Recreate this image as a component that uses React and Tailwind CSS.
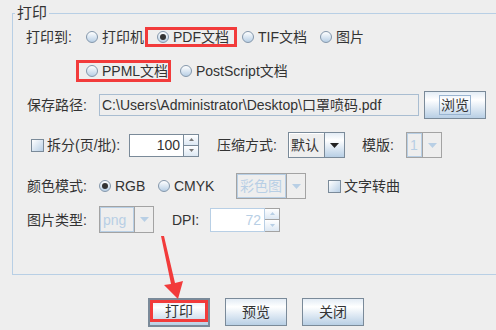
import React from 'react'

const RED = 'border-[#f23b3b]'

function Radio({ label, checked, className = '' }) {
  return (
    <span className={`flex items-center ${className}`}>
      <span className="flex items-center justify-center w-[12px] h-[12px] rounded-full border border-[#8497ab] bg-linear-to-b from-[#ffffff] to-[#b8cfe5]">
        {checked && <span className="w-[6px] h-[6px] rounded-full bg-[#333333]" />}
      </span>
      <span className="ml-[4px] whitespace-nowrap">{label}</span>
    </span>
  )
}

function Checkbox({ label, className = '' }) {
  return (
    <span className={`flex items-center ${className}`}>
      <span className="w-[13px] h-[13px] border border-[#7a8a99] bg-linear-to-br from-[#ffffff] to-[#b8cfe5]" />
      <span className="ml-[3px] whitespace-nowrap">{label}</span>
    </span>
  )
}

function Arrow({ up, color }) {
  return (
    <svg width="5" height="3" viewBox="0 0 5 3">
      <path d={up ? 'M2.5 0 L5 3 L0 3 Z' : 'M0 0 L5 0 L2.5 3 Z'} fill={color} />
    </svg>
  )
}

function Spinner({ value, disabled, className = '' }) {
  const c = disabled ? '#b8cfe5' : '#333333'
  return (
    <div className={`flex ${className}`}>
      <div
        className={`flex-1 flex items-center justify-end pr-[3px] bg-white border ${
          disabled ? 'border-[#b8cfe5] text-[#b8cfe5]' : 'border-[#7a8a99] text-[#333333]'
        }`}
      >
        {value}
      </div>
      <div className="w-[15px] flex flex-col">
        <div className={`flex-1 flex items-center justify-center border border-l-0 bg-linear-to-b from-[#ffffff] to-[#dde8f3] ${disabled ? 'border-[#a3a3a3]' : 'border-[#7a8a99]'}`}>
          <Arrow up color={disabled ? '#b8cfe5' : '#777777'} />
        </div>
        <div className={`flex-1 flex items-center justify-center border border-l-0 border-t-0 bg-linear-to-b from-[#ffffff] to-[#dde8f3] ${disabled ? 'border-[#a3a3a3]' : 'border-[#7a8a99]'}`}>
          <Arrow color={disabled ? '#b8cfe5' : '#777777'} />
        </div>
      </div>
      <span className="hidden">{c}</span>
    </div>
  )
}

function Combo({ value, disabled, className = '' }) {
  if (disabled) {
    return (
      <div className={`flex border border-[#a3a3a3] ${className}`}>
        <div className="flex-1 flex items-center pl-[2px] border border-[#b8cfe5] text-[#b8cfe5] whitespace-nowrap overflow-hidden">
          {value}
        </div>
        <div className="w-[19px] flex items-center justify-center border-l border-[#a3a3a3]">
          <svg width="9" height="5" viewBox="0 0 9 5">
            <path d="M0 0 L9 0 L4.5 5 Z" fill="#b8cfe5" />
          </svg>
        </div>
      </div>
    )
  }
  return (
    <div className={`flex border border-[#7a8a99] ${className}`}>
      <div className="flex-1 flex items-center pl-[2px] bg-[#eeeeee] border-r border-[#7a8a99] shadow-[inset_1px_1px_0_#ffffff] whitespace-nowrap">
        {value}
      </div>
      <div className="w-[19px] flex items-center justify-center bg-linear-to-b from-[#e3ecf5] via-[#ffffff] via-30% to-[#b8cfe5]">
        <svg width="9" height="5" viewBox="0 0 9 5">
          <path d="M0 0 L9 0 L4.5 5 Z" fill="#222222" />
        </svg>
      </div>
    </div>
  )
}

function Button({ children, className = '' }) {
  return (
    <div
      className={`flex items-center justify-center border border-[#7a8a99] bg-linear-to-b from-[#e3ecf5] via-[#ffffff] via-30% to-[#b8cfe5] ${className}`}
    >
      {children}
    </div>
  )
}

export default function App() {
  return (
    <div className="relative w-[496px] h-[330px] overflow-hidden bg-[#eeeeee] text-[14px] leading-none text-[#333333] font-['Liberation_Sans','Noto_Sans_CJK_SC',sans-serif]">
      <div className="relative mt-[13px] ml-[12px] w-[500px] h-[262px] border border-[#b8cfe5] flex flex-col pt-[13px]">
        <span className="absolute left-[2px] -top-[10px] px-[2px] bg-[#eeeeee] text-[15px] leading-[18px]">打印</span>

        {/* row 1 */}
        <div className="flex items-center h-[20px] pl-[13px]">
          <span className="w-[60px]">打印到:</span>
          <Radio label="打印机" className="w-[59px]" />
          <div className={`flex items-center w-[92px] h-[20px] pl-[9px] border-[3px] ${RED}`}>
            <Radio label="PDF文档" checked />
          </div>
          <Radio label="TIF文档" className="ml-[5px] w-[78px]" />
          <Radio label="图片" />
        </div>

        {/* row 2 */}
        <div className="flex items-center h-[22px] mt-[13px] pl-[63px]">
          <div className={`flex items-center w-[95px] h-[22px] pl-[7px] border-[3px] ${RED}`}>
            <Radio label="PPML文档" />
          </div>
          <Radio label="PostScript文档" className="ml-[9px]" />
        </div>

        {/* row 3 */}
        <div className="flex items-center h-[28px] mt-[9px] pl-[14px]">
          <span className="w-[72px]">保存路径:</span>
          <div className="w-[320px] h-[22px] flex items-center pl-[2px] border border-[#a9bdd1] whitespace-nowrap overflow-hidden">
            C:\Users\Administrator\Desktop\口罩喷码.pdf
          </div>
          <Button className="ml-[5px] w-[62px] h-[28px]">
            <span className="border border-[#99b4d1] px-[1px] py-[2px]">浏览</span>
          </Button>
        </div>

        {/* row 4 */}
        <div className="flex items-center h-[26px] mt-[13px] pl-[18px]">
          <Checkbox label="拆分(页/批):" className="w-[98px]" />
          <Spinner value="100" className="w-[70px] h-[23px]" />
          <span className="ml-[18px] w-[71px]">压缩方式:</span>
          <Combo value="默认" className="w-[57px] h-[26px]" />
          <span className="ml-[17px] w-[44px]">模版:</span>
          <Combo value="1" disabled className="w-[36px] h-[26px]" />
        </div>

        {/* row 5 */}
        <div className="flex items-center h-[26px] mt-[15px] pl-[14px]">
          <span className="w-[72px]">颜色模式:</span>
          <Radio label="RGB" checked className="w-[59px]" />
          <Radio label="CMYK" className="w-[78px]" />
          <Combo value="彩色图" disabled className="w-[70px] h-[26px]" />
          <Checkbox label="文字转曲" className="ml-[22px]" />
        </div>

        {/* row 6 */}
        <div className="flex items-center h-[27px] mt-[7px] pl-[14px]">
          <span className="w-[72px]">图片类型:</span>
          <Combo value="png" disabled className="w-[55px] h-[27px]" />
          <span className="ml-[18px] w-[38px]">DPI:</span>
          <Spinner value="72" disabled className="w-[70px] h-[24px]" />
        </div>
      </div>

      {/* bottom buttons */}
      <div className="flex mt-[23px] pl-[148px]">
        <div className="w-[62px] h-[29px] flex flex-col border-[2px] border-[#7a8a99] bg-linear-to-b from-[#e3ecf5] via-[#ffffff] via-30% to-[#b8cfe5]">
          <div className={`h-[22px] flex items-center justify-center border-[3px] ${RED}`}>打印</div>
        </div>
        <Button className="ml-[15px] w-[62px] h-[28px]">预览</Button>
        <Button className="ml-[15px] w-[62px] h-[28px]">关闭</Button>
      </div>

      {/* annotation arrow */}
      <svg className="absolute inset-0 pointer-events-none" width="496" height="330" viewBox="0 0 496 330">
        <path d="M161 236 L164 236 L175 283 L183 281 L178 299 L164 285 L171 284 Z" fill="#f23b3b" />
      </svg>
    </div>
  )
}
